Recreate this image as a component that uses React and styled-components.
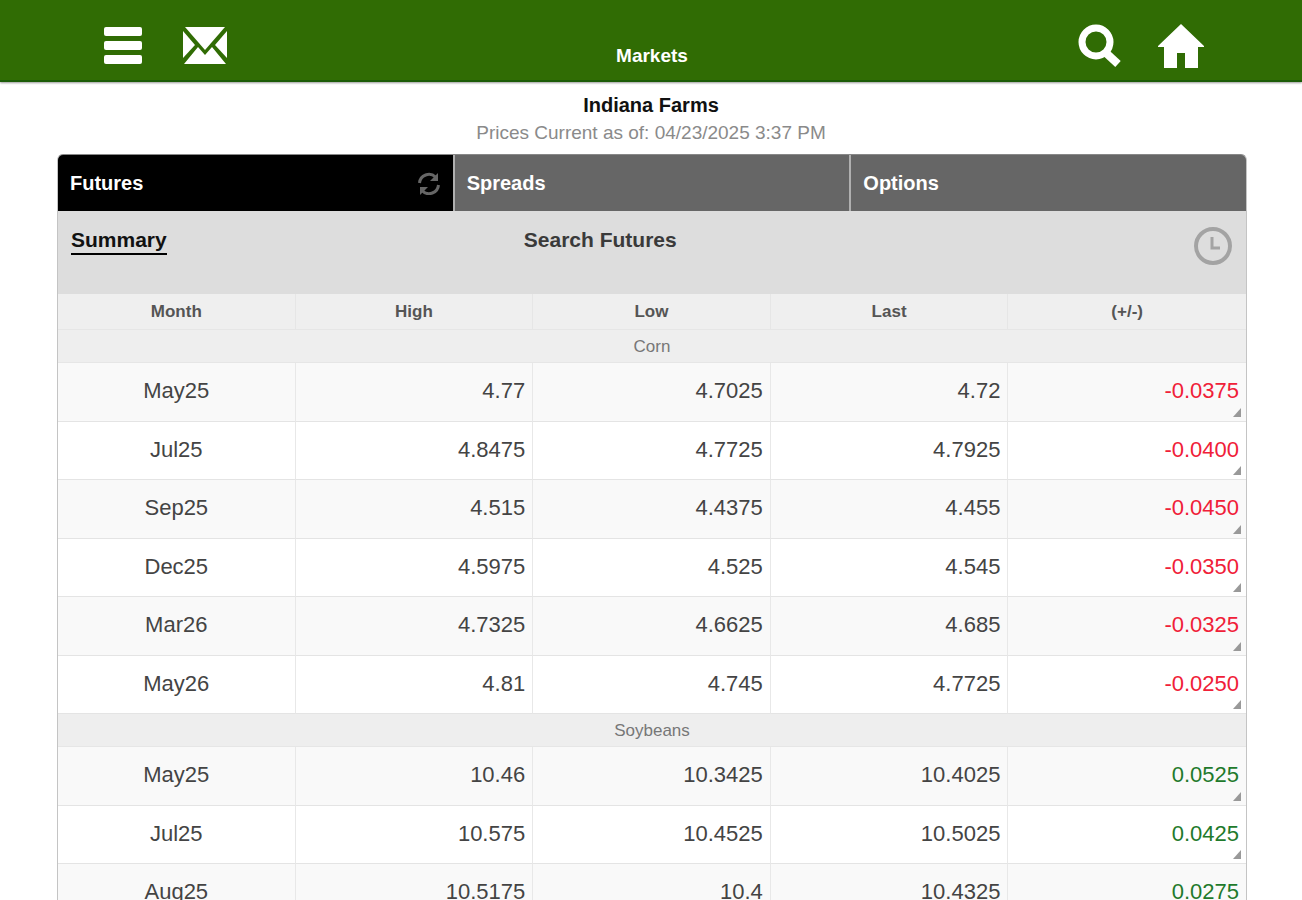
import React, { useState } from 'react';
import styled, { createGlobalStyle } from 'styled-components';


const GlobalStyle = createGlobalStyle`
  * {
    box-sizing: border-box;
  }

  body {
    margin: 0;
    background-color: #fff;
    font-family: "Liberation Sans", Arial, sans-serif;
  }
`;


// Data

const tabs = ['Futures', 'Spreads', 'Options'];

const columns = ['Month', 'High', 'Low', 'Last', '(+/-)'];

const commodities = [
  {
    name: 'Corn',
    rows: [
      ['May25', '4.77', '4.7025', '4.72', '-0.0375'],
      ['Jul25', '4.8475', '4.7725', '4.7925', '-0.0400'],
      ['Sep25', '4.515', '4.4375', '4.455', '-0.0450'],
      ['Dec25', '4.5975', '4.525', '4.545', '-0.0350'],
      ['Mar26', '4.7325', '4.6625', '4.685', '-0.0325'],
      ['May26', '4.81', '4.745', '4.7725', '-0.0250'],
    ],
  },
  {
    name: 'Soybeans',
    rows: [
      ['May25', '10.46', '10.3425', '10.4025', '0.0525'],
      ['Jul25', '10.575', '10.4525', '10.5025', '0.0425'],
      ['Aug25', '10.5175', '10.4', '10.4325', '0.0275'],
    ],
  },
];


// Icons

const MenuIcon = () => (
  <svg width="38" height="38" viewBox="0 0 38 38" fill="#fff" aria-hidden="true">
    <rect x="0" y="0" width="38" height="9" rx="2" />
    <rect x="0" y="14" width="38" height="9" rx="2" />
    <rect x="0" y="28" width="38" height="9" rx="2" />
  </svg>
);

const MailIcon = () => (
  <svg width="44" height="38" viewBox="0 0 44 38" fill="#fff" aria-hidden="true">
    <path d="M2 0H42L22 23Z" />
    <path d="M0 4L12 18L0 31Z" />
    <path d="M44 4L32 18L44 31Z" />
    <path d="M15 20L22 28L29 20L43 37H1Z" />
  </svg>
);

const SearchIcon = () => (
  <svg width="44" height="44" viewBox="0 0 44 44" fill="none" stroke="#fff" aria-hidden="true">
    <circle cx="19" cy="18" r="14" strokeWidth="7" />
    <path d="M28 28L41 40" strokeWidth="8" />
  </svg>
);

const HomeIcon = () => (
  <svg width="46" height="44" viewBox="0 0 46 44" fill="#fff" aria-hidden="true">
    <path d="M23 0L46 22V23H40V44H27V29H19V44H6V23H0V22Z" />
  </svg>
);

const RefreshIcon = () => (
  <svg width="24" height="24" viewBox="0 0 24 24" fill="none" stroke="#666" strokeWidth="3" aria-hidden="true">
    <path d="M2.5 12A9.5 9.5 0 0 1 18.5 6" />
    <path d="M21.5 14A9.5 9.5 0 0 1 5.5 20" />
    <path d="M21 2V10H13Z" fill="#666" stroke="none" />
    <path d="M3 24V16H11Z" fill="#666" stroke="none" />
  </svg>
);

const ClockIcon = () => (
  <svg width="38" height="38" viewBox="0 0 38 38" fill="none" stroke="#a3a3a3" aria-hidden="true">
    <circle cx="19" cy="19" r="17" strokeWidth="4" />
    <path d="M18 10V21H26" strokeWidth="3" />
  </svg>
);


// Top bar

const TopBar = styled.header`
  display: grid;
  grid-template-columns: 1fr auto 1fr;
  height: 82px;
  padding: 0 80px 0 82px;
  background-color: #306c04;
  border-bottom: 2px solid #1c5c08;
  box-shadow: 0 1px 2px #999;
`;

const IconGroup = styled.div`
  display: flex;
  align-items: center;
  justify-content: ${(props) => (props.$end ? 'flex-end' : 'flex-start')};
  padding-top: 12px;
`;

const IconButton = styled.button`
  display: flex;
  justify-content: center;
  width: ${(props) => (props.$wide ? '82px' : 'auto')};
  padding: 0;
  border: none;
  background: none;
  cursor: pointer;
`;

const PageTitle = styled.h1`
  align-self: end;
  margin: 0;
  padding-bottom: 12px;
  color: #fff;
  font-size: 19px;
  line-height: 24px;
`;


// Heading under the bar

const Heading = styled.div`
  padding: 10px 0 8px;
  text-align: center;
  line-height: 27px;
`;

const FarmName = styled.h2`
  margin: 0;
  color: #111;
  font-size: 20px;
`;

const PricesTime = styled.p`
  margin: 0;
  color: #8a8a8a;
  font-size: 19px;
`;


// Market panel

const Panel = styled.main`
  margin: 0 55px 0 57px;
  border: 1px solid #c4c4c4;
  border-top-color: #888;
  border-radius: 6px 6px 0 0;
  overflow: hidden;
`;

const TabBar = styled.nav`
  display: grid;
  grid-template-columns: repeat(3, 1fr);
  gap: 2px;
  background-color: #b0b0b0;
`;

const Tab = styled.button`
  display: flex;
  align-items: center;
  justify-content: space-between;
  height: 56px;
  padding: 0 12px;
  border: none;
  background-color: ${(props) => (props.$active ? '#000' : '#666')};
  color: #fff;
  font-family: inherit;
  font-size: 20px;
  font-weight: bold;
  cursor: pointer;
`;

const SubNav = styled.div`
  display: grid;
  grid-template-columns: 39% 1fr auto;
  align-items: start;
  height: 83px;
  padding: 16px 14px 0 13px;
  background-color: #ddd;
`;

const SubLink = styled.a`
  justify-self: start;
  border-bottom: 2px solid ${(props) => (props.$active ? '#000' : 'transparent')};
  color: ${(props) => (props.$active ? '#111' : '#3a3a3a')};
  font-size: 21px;
  font-weight: bold;
  line-height: 26px;
  text-decoration: none;
`;

const PriceTable = styled.table`
  width: 100%;
  table-layout: fixed;
  border-collapse: separate;
  border-spacing: 0;
`;

const ColumnHead = styled.th`
  height: 36px;
  padding: 1px 0 0;
  background-color: #efefef;
  border-right: 1px solid #e6e6e6;
  border-bottom: 1px solid #e6e6e6;
  color: #555;
  font-size: 17px;

  &:last-child {
    border-right: none;
  }
`;

const GroupHead = styled.th`
  height: 33px;
  padding: 1px 0 0;
  background-color: #eee;
  border-bottom: 1px solid #e6e6e6;
  color: #777;
  font-size: 17px;
  font-weight: normal;
`;

const Row = styled.tr`
  height: 58px;
  background-color: #fff;

  &:nth-child(even) {
    height: 59px;
    background-color: #f9f9f9;
  }
`;

const Cell = styled.td`
  position: relative;
  padding: 0 7px 2px;
  border-right: 1px solid #e8e8e8;
  border-bottom: 1px solid #e4e4e4;
  color: #444;
  font-size: 22px;
  text-align: right;

  &:first-child {
    text-align: center;
  }
`;

const ChangeCell = styled(Cell)`
  border-right: none;
  color: ${(props) => (props.$down ? '#f02038' : '#1f7a2c')};

  &::after {
    content: '';
    position: absolute;
    right: 5px;
    bottom: 4px;
    border-left: 8px solid transparent;
    border-bottom: 9px solid #999;
  }
`;


const App = () => {
  const [activeTab, setActiveTab] = useState('Futures');

  return (
    <>
      <GlobalStyle />
      <TopBar>
        <IconGroup>
          <IconButton $wide aria-label="Menu"><MenuIcon /></IconButton>
          <IconButton $wide aria-label="Messages"><MailIcon /></IconButton>
        </IconGroup>
        <PageTitle>Markets</PageTitle>
        <IconGroup $end>
          <IconButton $wide aria-label="Search"><SearchIcon /></IconButton>
          <IconButton $wide aria-label="Home"><HomeIcon /></IconButton>
        </IconGroup>
      </TopBar>

      <Heading>
        <FarmName>Indiana Farms</FarmName>
        <PricesTime>Prices Current as of: 04/23/2025 3:37 PM</PricesTime>
      </Heading>

      <Panel>
        <TabBar>
          {tabs.map((tab) => (
            <Tab key={tab} $active={tab === activeTab} onClick={() => setActiveTab(tab)}>
              {tab}
              {tab === activeTab && <RefreshIcon />}
            </Tab>
          ))}
        </TabBar>

        <SubNav>
          <SubLink href="#summary" $active>Summary</SubLink>
          <SubLink href="#search">Search Futures</SubLink>
          <IconButton aria-label="History"><ClockIcon /></IconButton>
        </SubNav>

        <PriceTable>
          <thead>
            <tr>
              {columns.map((column) => (
                <ColumnHead key={column} scope="col">{column}</ColumnHead>
              ))}
            </tr>
          </thead>
          {commodities.map((commodity) => (
            <tbody key={commodity.name}>
              <tr>
                <GroupHead colSpan={5} scope="rowgroup">{commodity.name}</GroupHead>
              </tr>
              {commodity.rows.map(([month, high, low, last, change]) => (
                <Row key={month}>
                  <Cell>{month}</Cell>
                  <Cell>{high}</Cell>
                  <Cell>{low}</Cell>
                  <Cell>{last}</Cell>
                  <ChangeCell $down={change.startsWith('-')}>{change}</ChangeCell>
                </Row>
              ))}
            </tbody>
          ))}
        </PriceTable>
      </Panel>
    </>
  );
};

export default App;
